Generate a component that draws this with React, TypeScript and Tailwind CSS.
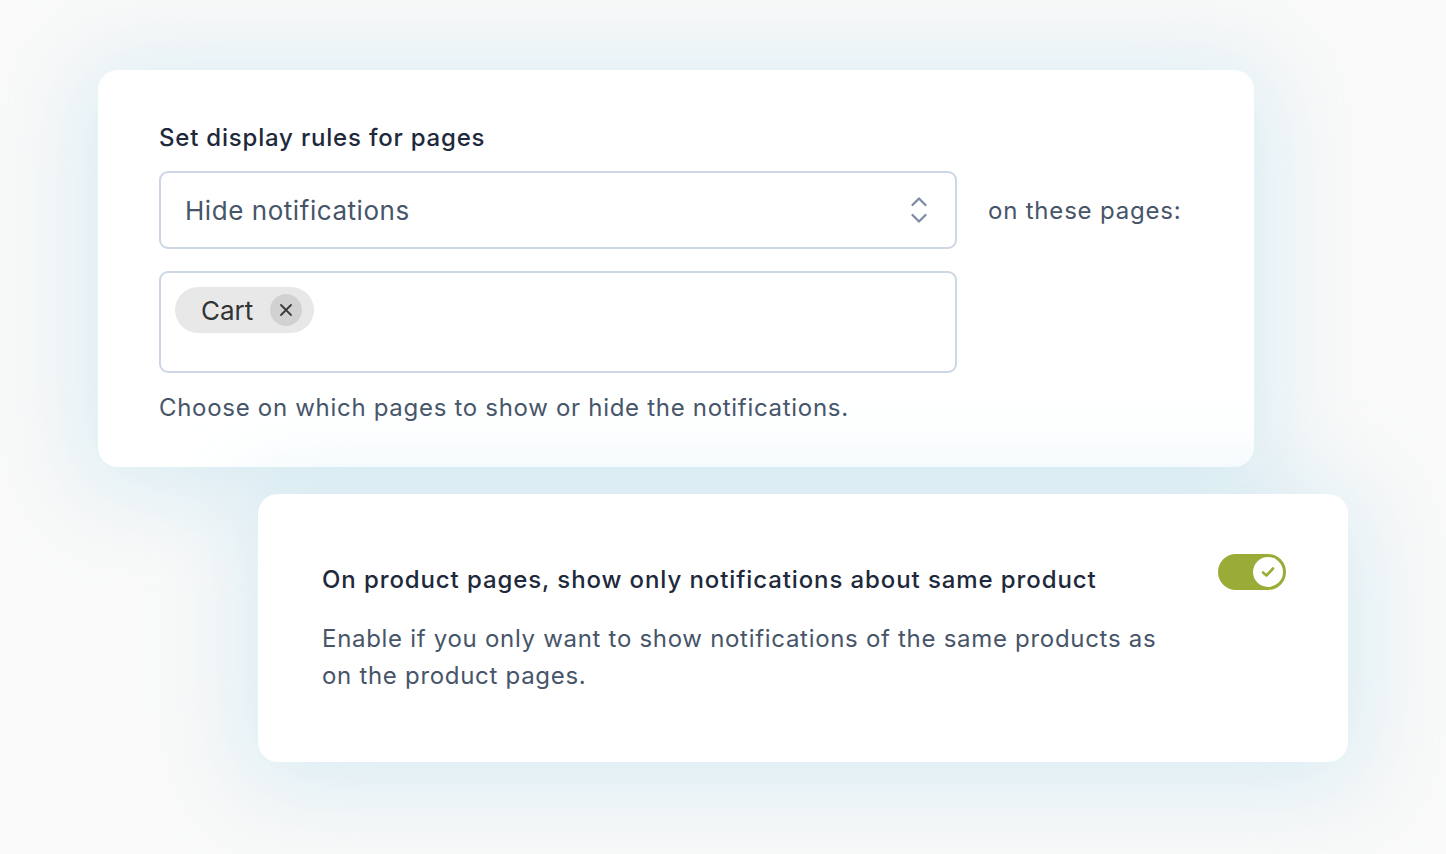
import React from "react";

export default function App() {
  return (
    <div
      className="w-[1446px] h-[854px] overflow-hidden bg-[#f9f9f9]"
      style={{ fontFamily: "Inter, 'Noto Sans', sans-serif" }}
    >
      <div className="flex flex-col pt-[70px]">
        {/* Card 1 */}
        <div className="ml-[98px] w-[1156px] h-[397px] bg-white rounded-[20px] shadow-[0_10px_90px_14px_rgba(170,218,234,0.4)] pl-[61px]">
          <div className="pt-[52px]">
            <div className="text-[24px] leading-[32px] font-medium text-[#1e293b] tracking-[0.8px]">
              Set display rules for pages
            </div>
            <div className="flex items-center mt-[17px]">
              <div className="w-[798px] h-[78px] border-2 border-[#cdd6e4] rounded-[9px] flex items-center justify-between pl-[24px] pr-[27px]">
                <span className="text-[26px] text-[#475569] tracking-[0.55px]">Hide notifications</span>
                <svg width="18" height="28" viewBox="0 0 18 28" fill="none">
                  <path d="M2.5 9 L9 2.5 L15.5 9" stroke="#7d8ba3" strokeWidth="2.3" strokeLinecap="round" strokeLinejoin="round" />
                  <path d="M2.5 19 L9 25.5 L15.5 19" stroke="#7d8ba3" strokeWidth="2.3" strokeLinecap="round" strokeLinejoin="round" />
                </svg>
              </div>
              <span className="ml-[31px] text-[24px] text-[#475569] mt-[2px] tracking-[0.8px]">on these pages:</span>
            </div>
            <div className="mt-[22px] w-[798px] h-[102px] border-2 border-[#cdd6e4] rounded-[9px] pl-[14px] pt-[14px]">
              <div className="inline-flex items-center h-[46px] rounded-full bg-[#e8e8e8] pl-[26px] pr-[12px]">
                <span className="text-[26px] text-[#333333]">Cart</span>
                <span className="ml-[17px] w-[32px] h-[32px] rounded-full bg-[#d1d1d1] flex items-center justify-center">
                  <svg width="14" height="14" viewBox="0 0 14 14">
                    <path d="M2 2 L12 12 M12 2 L2 12" stroke="#3a3a3a" strokeWidth="1.8" strokeLinecap="round" />
                  </svg>
                </span>
              </div>
            </div>
            <div className="mt-[19px] text-[24px] leading-[32px] text-[#475569] tracking-[0.7px]">
              Choose on which pages to show or hide the notifications.
            </div>
          </div>
        </div>

        {/* Card 2 */}
        <div className="mt-[27px] ml-[258px] w-[1090px] h-[268px] bg-white rounded-[20px] shadow-[0_10px_90px_14px_rgba(170,218,234,0.4)] pl-[64px] pr-[62px] pt-[60px] flex justify-between items-start">
          <div className="w-[850px] pt-[10px]">
            <div className="text-[24px] leading-[32px] font-medium text-[#1e293b] tracking-[0.9px]">
              On product pages, show only notifications about same product
            </div>
            <div className="mt-[24px] text-[24px] leading-[37px] text-[#475569] tracking-[0.7px]">
              Enable if you only want to show notifications of the same products as on the product pages.
            </div>
          </div>
          <div className="w-[68px] h-[36px] rounded-full bg-[#9bab37] flex items-center justify-end pr-[3px]">
            <div className="w-[30px] h-[30px] rounded-full bg-white flex items-center justify-center">
              <svg width="14" height="12" viewBox="0 0 14 12">
                <path d="M2 6.5 L5.5 9.5 L12 2.5" stroke="#9bab37" strokeWidth="2.6" fill="none" strokeLinecap="round" strokeLinejoin="round" />
              </svg>
            </div>
          </div>
        </div>
      </div>
    </div>
  );
}
